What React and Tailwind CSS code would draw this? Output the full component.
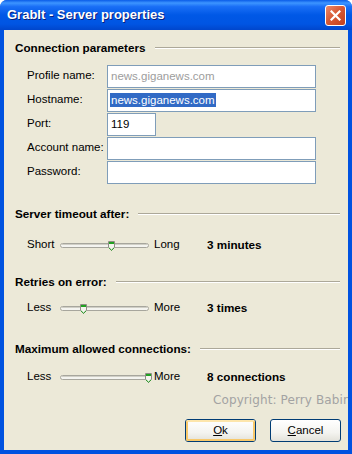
import React from 'react';

const label = 'font-["Liberation_Sans",Arial,sans-serif] text-[11.5px] text-black';
const heading = 'font-["Liberation_Sans",Arial,sans-serif] font-bold text-[11.7px] text-black';

const SectionTitle = ({ title, className = '' }) => (
  <div className={`flex items-center h-[14px] pr-[8px] ${className}`}>
    <span className={`${heading} whitespace-nowrap`}>{title}</span>
    <div className="flex-1 ml-[9px] h-[2px] border-t border-[#aca899] border-b border-b-white" />
  </div>
);

const Field = ({ name, value, width = 'w-[209px]', muted, selected }) => (
  <div className="flex items-center h-[22px]">
    <span className={`${label} w-[80px]`}>{name}</span>
    <div className={`${width} h-[23px] bg-white border border-[#7f9db9] flex items-center pl-[2px]`}>
      {value && (
        <span
          className={`font-["Liberation_Sans",Arial,sans-serif] text-[11.5px] leading-[14px] px-[1px] ${
            muted ? 'text-[#9d9d9d]' : selected ? 'bg-[#316ac5] text-white' : 'text-black'
          }`}
        >
          {value}
        </span>
      )}
    </div>
  </div>
);

const Thumb = () => (
  <svg width="7" height="10" viewBox="0 0 7 10" className="absolute top-[-3px]">
    <path d="M0.5 0.5 H6.5 V6.5 L3.5 9.5 L0.5 6.5 Z" fill="#f5f4ee" stroke="#8f8d84" />
    <rect x="1" y="1" width="5" height="2" fill="#21a121" />
    <path d="M1 6.8 L3.5 9.2 L6 6.8" fill="none" stroke="#1e9b1e" />
  </svg>
);

const Slider = ({ left, right, value, thumb }) => (
  <div className="flex items-center h-[16px] pl-[12px]">
    <span className={`${label} w-[33px]`}>{left}</span>
    <div className="relative w-[89px] h-[5px] rounded-[3px] border border-[#a7a69d] bg-[#f4f4f0]">
      <div className="absolute left-0 right-0 top-0 h-[1px] bg-[#d0cfc6]" />
      <div style={{ left: thumb }} className="absolute">
        <Thumb />
      </div>
    </div>
    <span className={`${label} ml-[5px] w-[53px]`}>{right}</span>
    <span className={heading}>{value}</span>
  </div>
);

const XpButton = ({ children, isDefault }) => (
  <button
    type="button"
    className="w-[71px] h-[23px] rounded-[3px] border border-[#003c74] bg-[linear-gradient(to_bottom,#ffffff_0%,#f4f4f0_60%,#e3e2da_100%)] p-0 flex items-center justify-center"
  >
    <span
      className={`w-full h-full flex items-center justify-center rounded-[2px] ${
        isDefault ? 'border-2 border-[#f8c96b] border-t-[#fde6ac]' : 'border-2 border-transparent'
      } font-["Liberation_Sans",Arial,sans-serif] text-[11.5px] text-black`}
    >
      {children}
    </span>
  </button>
);

export default function App() {
  return (
    <div className="w-[352px] h-[454px] flex flex-col bg-[#0052e0] overflow-hidden rounded-t-[7px]">
      {/* Title bar */}
      <div className="h-[30px] shrink-0 flex items-center justify-between pl-[7px] pr-[6px] bg-[linear-gradient(to_bottom,#0a5ce8_0%,#3d95ff_10%,#1a6ff6_22%,#0058e6_50%,#0055e3_80%,#0046cc_100%)]">
        <span className='font-["Liberation_Sans",Arial,sans-serif] font-bold text-[13px] text-white [text-shadow:1px_1px_0_#0a1e7a]'>
          GrabIt - Server properties
        </span>
        <div className="w-[21px] h-[21px] mt-[1px] rounded-[3px] border border-white bg-[linear-gradient(135deg,#eb8a6c_0%,#d85a36_45%,#c2401c_100%)] flex items-center justify-center">
          <svg width="11" height="11" viewBox="0 0 11 11">
            <path d="M1.5 1.5 L9.5 9.5 M9.5 1.5 L1.5 9.5" stroke="white" strokeWidth="2.2" strokeLinecap="square" />
          </svg>
        </div>
      </div>

      {/* Client area */}
      <div className="flex-1 mx-[4px] mb-[4px] bg-[#ece9d8] flex flex-col pl-[11px] overflow-hidden">
        <SectionTitle title="Connection parameters" className="mt-[11px]" />

        <div className="flex flex-col gap-[2px] mt-[10px] pl-[12px]">
          <Field name="Profile name:" value="news.giganews.com" muted />
          <Field name="Hostname:" value="news.giganews.com" selected />
          <Field name="Port:" value="119" width="w-[49px]" />
          <Field name="Account name:" />
          <Field name="Password:" />
        </div>

        <SectionTitle title="Server timeout after:" className="mt-[24px]" />
        <div className="mt-[16px]">
          <Slider left="Short" right="Long" value="3 minutes" thumb="47px" />
        </div>

        <SectionTitle title="Retries on error:" className="mt-[22px]" />
        <div className="mt-[11px]">
          <Slider left="Less" right="More" value="3 times" thumb="19px" />
        </div>

        <SectionTitle title="Maximum allowed connections:" className="mt-[26px]" />
        <div className="mt-[13px]">
          <Slider left="Less" right="More" value="8 connections" thumb="84px" />
        </div>

        <div className='mt-[8px] h-[14px] pl-[198px] whitespace-nowrap font-["DejaVu_Sans",Verdana,sans-serif] text-[12px] tracking-[0.1px] leading-[14px] text-[#a3a3a3]'>
          Copyright: Perry Babin
        </div>

        <div className="mt-[12px] flex gap-[14px] pl-[170px]">
          <XpButton isDefault>
            <span className="underline">O</span>k
          </XpButton>
          <XpButton>
            <span className="underline">C</span>ancel
          </XpButton>
        </div>
      </div>
    </div>
  );
}
